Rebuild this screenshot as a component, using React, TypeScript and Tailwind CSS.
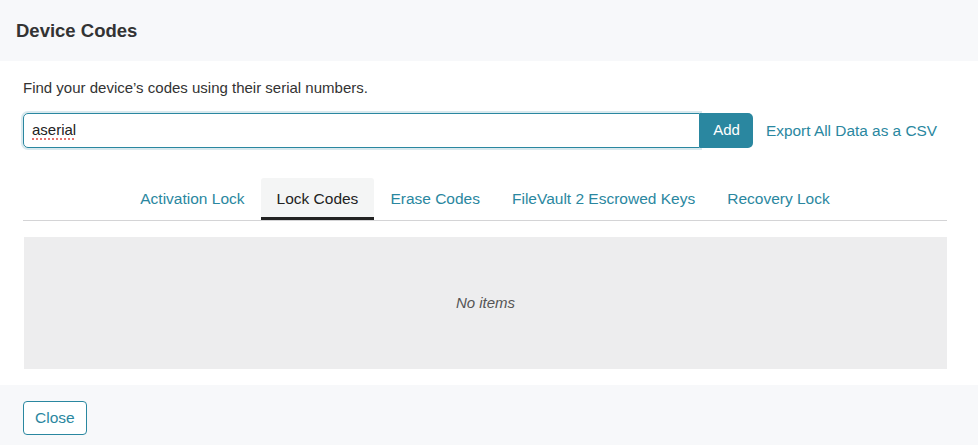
import React from "react";

const tabs = [
  "Activation Lock",
  "Lock Codes",
  "Erase Codes",
  "FileVault 2 Escrowed Keys",
  "Recovery Lock",
];

const App = () => {
  const active = "Lock Codes";

  return (
    <div className="w-[978px] h-[445px] bg-white font-['Liberation_Sans',Arial,sans-serif] flex flex-col overflow-hidden">
      {/* Header */}
      <div className="h-[61px] bg-[#f7f8fa] flex items-center px-4 shrink-0">
        <h1 className="text-[18.5px] font-bold text-[#333]">Device Codes</h1>
      </div>

      {/* Body */}
      <div className="h-[324px] shrink-0 pl-[23px] pr-[31px] pt-[17px]">
        <p className="text-[15px] text-[#333] leading-5">
          Find your device’s codes using their serial numbers.
        </p>

        <div className="flex items-center mt-[15px]">
          <div className="w-[677px] h-[35px] border border-[#2a87a0] rounded-l-[5px] shadow-[0_0_0_2px_rgba(42,135,160,0.18)] flex items-center px-[8px]">
            <span className="text-[15px] text-[#222] underline decoration-dotted decoration-[#e0443e] underline-offset-[3px]">
              aserial
            </span>
          </div>
          <button className="w-[53px] h-[35px] bg-[#2a87a0] text-white text-[15px] rounded-r-[5px]">
            Add
          </button>
          <a href="#" className="ml-[13px] text-[15.4px] text-[#2a87a0]">
            Export All Data as a CSV
          </a>
        </div>

        {/* Tabs */}
        <div className="mt-[30px] flex justify-center border-b border-[#d4d4d6]">
          {tabs.map((t) => (
            <button
              key={t}
              className={
                t === active
                  ? "h-[42px] px-4 pt-[2px] text-[15.5px] text-[#222] bg-[#f4f5f5] border-b-[3px] border-[#222] rounded-t-[3px]"
                  : "h-[42px] px-4 pt-[2px] text-[15.5px] text-[#2a87a0] border-b-[3px] border-transparent"
              }
            >
              {t}
            </button>
          ))}
        </div>

        {/* Table */}
        <div className="mt-[16px] ml-px h-[132px] bg-[#ededee] flex items-center justify-center">
          <span className="italic text-[15px] text-[#555]">No items</span>
        </div>
      </div>

      {/* Footer */}
      <div className="flex-1 bg-[#f7f8fa] px-[23px] pt-[16px]">
        <button className="h-[34px] px-[11px] border border-[#2a87a0] rounded-[4px] text-[15.5px] text-[#2a87a0] bg-white">
          Close
        </button>
      </div>
    </div>
  );
};

export default App;
